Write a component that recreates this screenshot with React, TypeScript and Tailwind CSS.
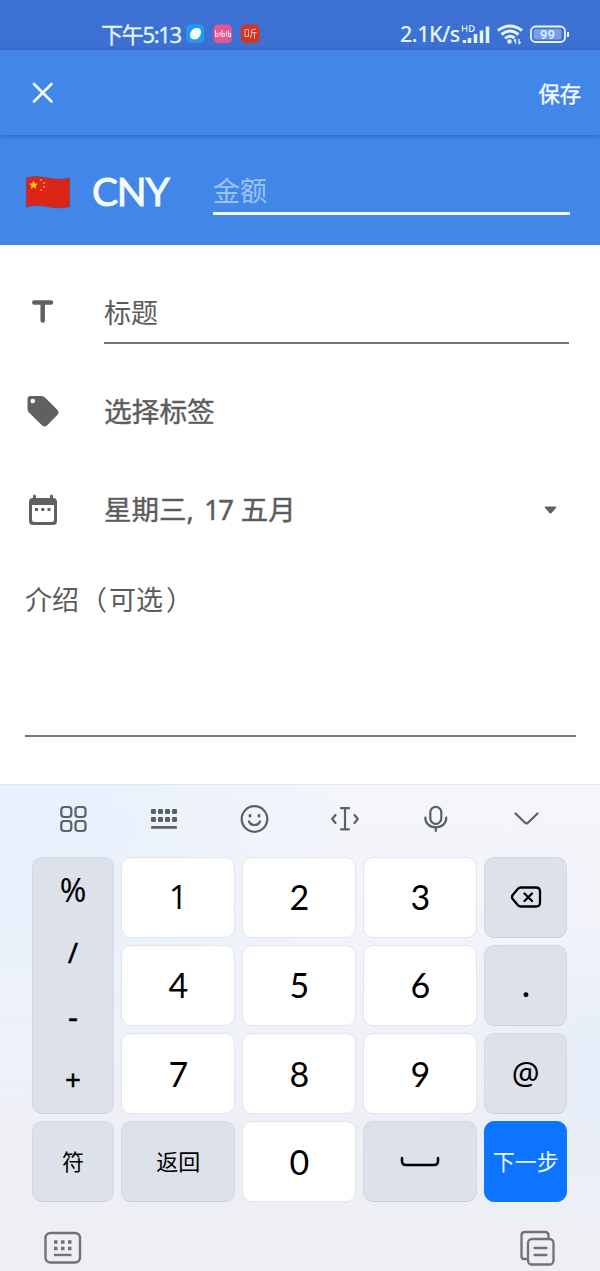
import type { ReactNode } from 'react';

const latin = "font-['Noto_Sans','Noto_Sans_CJK_SC',sans-serif]";
const cjk = "font-['Noto_Sans_CJK_SC',sans-serif]";

function StatusBar() {
  return (
    <div className="flex h-[50px] items-center bg-[#3c71d3] pt-[19px] pb-px pl-[101px] text-[#e4f5ff]">
      <div className={`${latin} w-[85px] text-[22px] leading-[30px] tracking-[-1.3px] whitespace-nowrap [-webkit-text-stroke:0.3px]`}>下午5:13</div>
      <svg className="h-[20px] w-[76px] shrink-0" viewBox="0 0 76 20">
        <rect x="0.3" y="0.5" width="18" height="18.5" rx="4.5" fill="#229af3" />
        <path d="M4 11.500c0-5 3.500-7.500 7-7.500q4 0 4 4c0 4-3 7.500-6.500 7.500-2.500 0-4.500-1.600-4.500-4z" fill="#f2ffff" />
        <rect x="27.500" y="0.500" width="18.500" height="18.500" rx="4.500" fill="#e4568f" />
        <path d="M29.500 6v6.500h2.300v-3h-2M34 8v4.500M36 6v6.500h2.300v-3H36M40.500 7v5.500M42.500 6v6.500h2v-3h-2" fill="none" stroke="#ffd3e8" strokeWidth="1.100" />
        <rect x="55" y="0.500" width="18.500" height="18.500" rx="4.500" fill="#d53524" />
        <path d="M59 5.500h3.500v7h-3.500zM70 5l-4.500 1v4.500L64.300 14M65.500 8.500h5M68.500 8.500v6" fill="none" stroke="#ffc0a5" strokeWidth="1" />
      </svg>
      <div className={`${latin} ml-[138px] w-[61px] text-[21.5px] leading-[32px] font-medium tracking-[-0.5px] whitespace-nowrap`}>2.1K/s</div>
      <svg className="h-[22px] w-[108px] shrink-0" viewBox="461 23 108 22" fill="none" stroke="#e4f5ff">
        <path d="M462.500 25.500v6M466.800 25.500v6M462.500 28.500h4.300M469.800 25.500v6h1.500q3-.5 3-3t-3-3z" strokeWidth="1.200" />
        <path d="M464.500 40v3M469.500 38v5M475.500 34v9M481.500 30.500v12.500M487.500 26.500v16.500" strokeWidth="3.500" />
        <path d="M498 30.500q12-9 24 0M501.500 34.500q8.500-7 17 0M505 38.300q5-4 9.500-.3" strokeWidth="3" />
        <circle cx="509.500" cy="41.500" r="2.200" fill="#e4f5ff" stroke="none" />
        <path d="M515.500 39v4.500M519 39v5M514 41l1.500-2M520.500 42l-1.500 2" strokeWidth="1.300" />
        <rect x="531" y="26.500" width="34" height="15.500" rx="4.500" strokeWidth="1.800" />
        <rect x="533.500" y="29" width="28" height="10.500" rx="2" fill="#789ee5" stroke="none" />
        <path d="M568 32v5" strokeWidth="2" />
        <text x="547.500" y="39" textAnchor="middle" fill="#e4f5ff" stroke="none" className="font-['Roboto',sans-serif] text-[13px] font-medium">99</text>
      </svg>
    </div>
  );
}

function Key({ children, tone = 'white', className = '' }: { children: ReactNode; tone?: 'white' | 'gray' | 'blue'; className?: string }) {
  const tones = {
    white: 'bg-white text-black border-[#e3e5ec]',
    gray: 'bg-[#dde2ea] text-black border-[#d4d8e2] border-b-[#c9cfda]',
    blue: 'bg-[#0d74ff] text-[#eefaff] border-[#0d74ff]',
  };
  return (
    <button className={`flex items-center justify-center rounded-[10px] border whitespace-nowrap ${tones[tone]} ${className}`}>{children}</button>
  );
}

function Digit({ n }: { n: string }) {
  const face = n === '1' ? "font-['Open_Sans',sans-serif] font-normal text-[33px]" : "font-['Lato',sans-serif] text-[34px]";
  return (
    <Key>
      <span className={`h-[40px] leading-[40px] ${face}`}>{n}</span>
    </Key>
  );
}

function Toolbar() {
  return (
    <svg className="block h-[71px] w-[600px]" viewBox="0 785 600 71" fill="none" stroke="#5c6068" strokeWidth="2.200" strokeLinecap="round" strokeLinejoin="round">
      <rect x="61.300" y="807" width="10" height="10" rx="3" />
      <rect x="75.500" y="807" width="10" height="10" rx="3" />
      <rect x="61.300" y="821" width="10" height="10" rx="3" />
      <rect x="75.500" y="821" width="10" height="10" rx="3" />
      <g fill="#5c6068" stroke="none">
        {[151, 158, 165, 172].map((x) => (
          <g key={x}>
            <rect x={x} y="809" width="5" height="5" rx="1" />
            <rect x={x} y="817" width="5" height="5" rx="1" />
          </g>
        ))}
        <rect x="151" y="826" width="26" height="2.800" rx="1" />
      </g>
      <circle cx="254.500" cy="819" r="12.800" />
      <path d="M249 821.500q1.300 3.500 5.500 3.500t5.500-3.500" />
      <path d="M250 815.500v.7M259 815.500v.7" strokeWidth="2.800" />
      <path d="M345 808.500v20.500M341 808.200h8M341 829.300h8M335.500 815l-3.300 4 3.300 4M354.500 815l3.300 4-3.300 4" />
      <rect x="430.300" y="806.800" width="11" height="17" rx="5.500" />
      <path d="M425.300 817.500c0 6 4.200 9.800 10.500 9.800s10.500-3.800 10.500-9.800M435.800 828v3" />
      <path d="M515.500 813.500l9.300 9q1.700 1.700 3.400 0l9.300-9" />
    </svg>
  );
}

function Keyboard() {
  return (
    <section className="h-[487px] border-t border-[#e3e7ee] bg-[radial-gradient(circle_at_5%_8%,#e7f0fd_0%,#e7f0fd00_45%),radial-gradient(circle_at_100%_60%,#e5edf9_0%,#e5edf900_25%),linear-gradient(180deg,#f4f6fb_0%,#f1f3f8_40%,#eeeff4_80%,#eeeff4_100%)]">
      <Toolbar />
      <div className="grid grid-cols-[82.500px_114px_114px_114px_83px] grid-rows-[81px_81px_81px_81px] gap-x-[7px] gap-y-[7.3px] pt-[0.500px] pl-[31.800px]">
        <Key tone="gray" className="row-span-3 flex-col justify-start font-['Noto_Sans',sans-serif] text-[28px] leading-[63.500px] [-webkit-text-stroke:0.400px] [&>span]:h-[63.500px]">
          <span className="text-[32px] [-webkit-text-stroke:0]">%</span><span>/</span><span className="text-[31px]">-</span><span>+</span>
        </Key>
        <Digit n="1" /><Digit n="2" /><Digit n="3" />
        <Key tone="gray">
          <svg className="h-6 w-8" viewBox="0 0 32 24" fill="none" stroke="black" strokeWidth="2.300" strokeLinecap="round" strokeLinejoin="round">
            <path d="M11 2.500h15q4 0 4 4v11q0 4-4 4H11q-2 0-3.300-1.500l-5-6q-1.500-2 0-4l5-6q1.300-1.500 3.300-1.500zM14.500 8.500l7.500 7.500M22 8.500L14.500 16" />
          </svg>
        </Key>
        <Digit n="4" /><Digit n="5" /><Digit n="6" />
        <Key tone="gray"><span className="h-[41px] font-['Noto_Sans',sans-serif] text-[30px] leading-[41px] font-semibold">.</span></Key>
        <Digit n="7" /><Digit n="8" /><Digit n="9" />
        <Key tone="gray"><span className="h-[42px] font-['Noto_Sans',sans-serif] text-[31px] leading-[38px]">@</span></Key>
        <Key tone="gray"><span className={`${cjk} h-[33px] text-[22px] leading-[31px]`}>符</span></Key>
        <Key tone="gray"><span className={`${cjk} h-[33px] text-[22px] leading-[31px]`}>返回</span></Key>
        <Digit n="0" />
        <Key tone="gray">
          <svg className="h-3 w-10" viewBox="0 0 40 12" fill="none" stroke="black" strokeWidth="2.500" strokeLinecap="round">
            <path d="M2 2v3q0 4 4 4h28q4 0 4-4V2" />
          </svg>
        </Key>
        <Key tone="blue"><span className={`${cjk} h-[33px] text-[22px] leading-[31px]`}>下一步</span></Key>
      </div>
      <div className="flex justify-between pt-[26px] pr-[44px] pl-[43px]">
        <svg className="h-10 w-10" viewBox="43 1228 40 40" fill="none" stroke="#707276" strokeWidth="2.400">
          <rect x="45.500" y="1233" width="34.500" height="29.500" rx="5" />
          <path d="M54 1242h3.500M61 1242h3.500M68 1242h3.500M54 1248.500h3.500M61 1248.500h3.500M68 1248.500h3.500" strokeWidth="3.500" />
          <path d="M54 1255h17.500" />
        </svg>
        <svg className="h-10 w-10" viewBox="516 1228 40 40" fill="none" stroke="#707276" strokeWidth="2.300" strokeLinecap="round">
          <path d="M526 1259h-2q-2.500 0-2.500-3v-20.500q0-3.500 3.500-3.500h20q3.500 0 3.500 3.500v2" />
          <rect x="528" y="1239" width="25.500" height="25.500" rx="4" />
          <path d="M534.500 1248h12M534.500 1255h12" />
        </svg>
      </div>
    </section>
  );
}

export default function App() {
  return (
    <div className={`${cjk} flex h-[1271px] w-[600px] flex-col overflow-hidden bg-white text-[#5c5c5c]`}>
      <StatusBar />
      <header className="z-10 flex h-[85px] items-center justify-between bg-[#4286e8] pr-[19px] pl-[32px] text-[#f0fcff] shadow-[0_1px_5px_rgba(20,60,120,0.450)]">
        <svg className="size-[22px]" viewBox="0 0 22 22" stroke="#f0fcff" strokeWidth="2.700" strokeLinecap="round">
          <path d="M2 2l17.500 17.500M19.500 2L2 19.500" />
        </svg>
        <button className="text-[21.300px] leading-8 [-webkit-text-stroke:0.4px]">保存</button>
      </header>
      <section className="flex h-[110px] bg-[#4286e8] pl-[25px]">
        <svg className="mt-[40px] h-9 w-[46px] shrink-0" viewBox="0 0 46 36">
          <path d="M1.500 3Q9 .5 22 3t22.500 0v28.500Q35 34 22 31.500T1.500 32z" fill="#dd2515" stroke="#80426a" strokeWidth="1" />
          <path d="M8.500 5.500l1.200 3.100 3.300.1-2.600 2 .9 3.200-2.800-1.800-2.800 1.800.9-3.200-2.600-2 3.300-.1z" fill="#ffcf28" />
          <g fill="#f5a329"><circle cx="16" cy="5" r="1.100" /><circle cx="19" cy="8" r="1.100" /><circle cx="19" cy="12" r="1.100" /><circle cx="16" cy="15" r="1.100" /></g>
        </svg>
        <div className="mt-[31px] ml-[21px] w-[121px] font-['Lato','Noto_Sans',sans-serif] text-[39px] leading-[50px] tracking-[-1.200px] text-[#f0fcff] [-webkit-text-stroke:1px]">CNY</div>
        <div className="mt-[30px] h-[50px] w-[357px] border-b-[3px] border-[#f0fcff] text-[27px] leading-[49px] text-[#9bc2f5]">金额</div>
      </section>
      <main className="flex h-[539px] shrink-0 flex-col pl-[25px]">
        <div className="flex">
          <svg className="mt-[53px] h-[26px] w-9" viewBox="0 0 36 26" stroke="#606060" strokeWidth="4.500" strokeLinecap="round"><path d="M9.300 4.500h16.700M17.700 4.500v18" /></svg>
          <div className="mt-[42px] ml-[43px] h-[57px] w-[465px] border-b-2 border-[#777] text-[27px] leading-[49px]">标题</div>
        </div>
        <div className="mt-[42px] flex h-[50px] items-center">
          <svg className="h-9 w-9" viewBox="0 0 36 36" fill="#606060">
            <path fillRule="evenodd" d="M5.500 3h11q2 0 3.500 1.500L32.500 17q2 2.500 0 4.800L22 32.500q-2.500 2-4.800 0L4 19.500Q2.500 18 2.500 16V6q0-3 3-3zm2.300 2.700a2.300 2.300 0 1 0 0 4.600 2.300 2.300 0 0 0 0-4.600z" />
          </svg>
          <span className="ml-[43px] h-[52px] text-[27.700px] leading-[50px] [-webkit-text-stroke:0.400px]">选择标签</span>
        </div>
        <div className="mt-[49px] flex h-[50px] items-center">
          <svg className="h-9 w-9" viewBox="0 0 36 36" fill="#606060">
            <path fillRule="evenodd" d="M9.500 2.500q1.500 0 1.500 2v1.500h14V4.500q0-2 1.500-2t1.500 2v1.500q4 0 4 4v19q0 4-4 4H8q-4 0-4-4V10q0-4 4-4V4.500q0-2 1.500-2zM7 13v14.500q0 2.500 2.500 2.500h17q2.500 0 2.500-2.500V13z" />
            <path d="M10 16h3v3h-3zM16.300 16h3v3h-3zM22.500 16h3v3h-3z" />
          </svg>
          <span className={`${latin} ml-[43px] w-[440px] text-[27.500px] leading-[50px] whitespace-nowrap [-webkit-text-stroke:0.400px]`}>星期三, <span className="ml-[3px] tracking-[-1.500px]">17</span> <span className="ml-px">五月</span></span>
          <svg className="h-2 w-[13px]" viewBox="0 0 13 8" fill="#606060"><path d="M2 .5h9q2 0 1 1.500L7.500 7q-1 1-2 0L1 2Q0 .5 2 .5z" /></svg>
        </div>
        <div className="mt-[39px] h-[163px] w-[551px] border-b-2 border-[#777] text-[27px] leading-[50px]">介绍<span className="ml-px">（</span><span className="mr-[3px] ml-[2px]">可选</span>）</div>
      </main>
      <Keyboard />
    </div>
  );
}
